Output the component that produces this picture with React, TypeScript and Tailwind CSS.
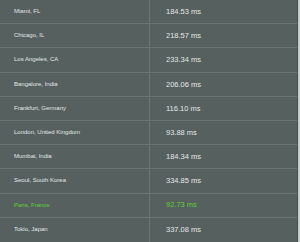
import React from 'react';

const rows: [string, string][] = [
  ['Miami, FL', '184.53 ms'],
  ['Chicago, IL', '218.57 ms'],
  ['Los Angeles, CA', '233.34 ms'],
  ['Bangalore, India', '206.06 ms'],
  ['Frankfurt, Germany', '116.10 ms'],
  ['London, United Kingdom', '93.88 ms'],
  ['Mumbai, India', '184.34 ms'],
  ['Seoul, South Korea', '334.85 ms'],
  ['Paris, France', '92.73 ms'],
  ['Tokio, Japan', '337.08 ms'],
];

const App: React.FC = () => {
  return (
    <div className="flex h-[242px] w-[300px] bg-[#c9cccc] font-['Liberation_Sans',Arial,sans-serif]">
      <div className="flex w-[298px] flex-col border-r border-[#454e4d] bg-[#56605f]">
        {rows.map(([city, ping], i) => {
          const best = city === 'Paris, France';
          const color = best ? 'text-[#5fcf3a]' : 'text-[#e2e6e5]';
          return (
            <div
              key={city}
              className={`flex h-[24.2px] ${i < rows.length - 1 ? 'border-b border-[#6c7675]' : ''}`}
            >
              <div className={`flex w-[150px] items-center border-r border-[#6c7675] pl-[14px] text-[6px] ${color}`}>
                {city}
              </div>
              <div className={`flex flex-1 items-center pl-[16px] text-[7.5px] ${color}`}>{ping}</div>
            </div>
          );
        })}
      </div>
    </div>
  );
};

export default App;
